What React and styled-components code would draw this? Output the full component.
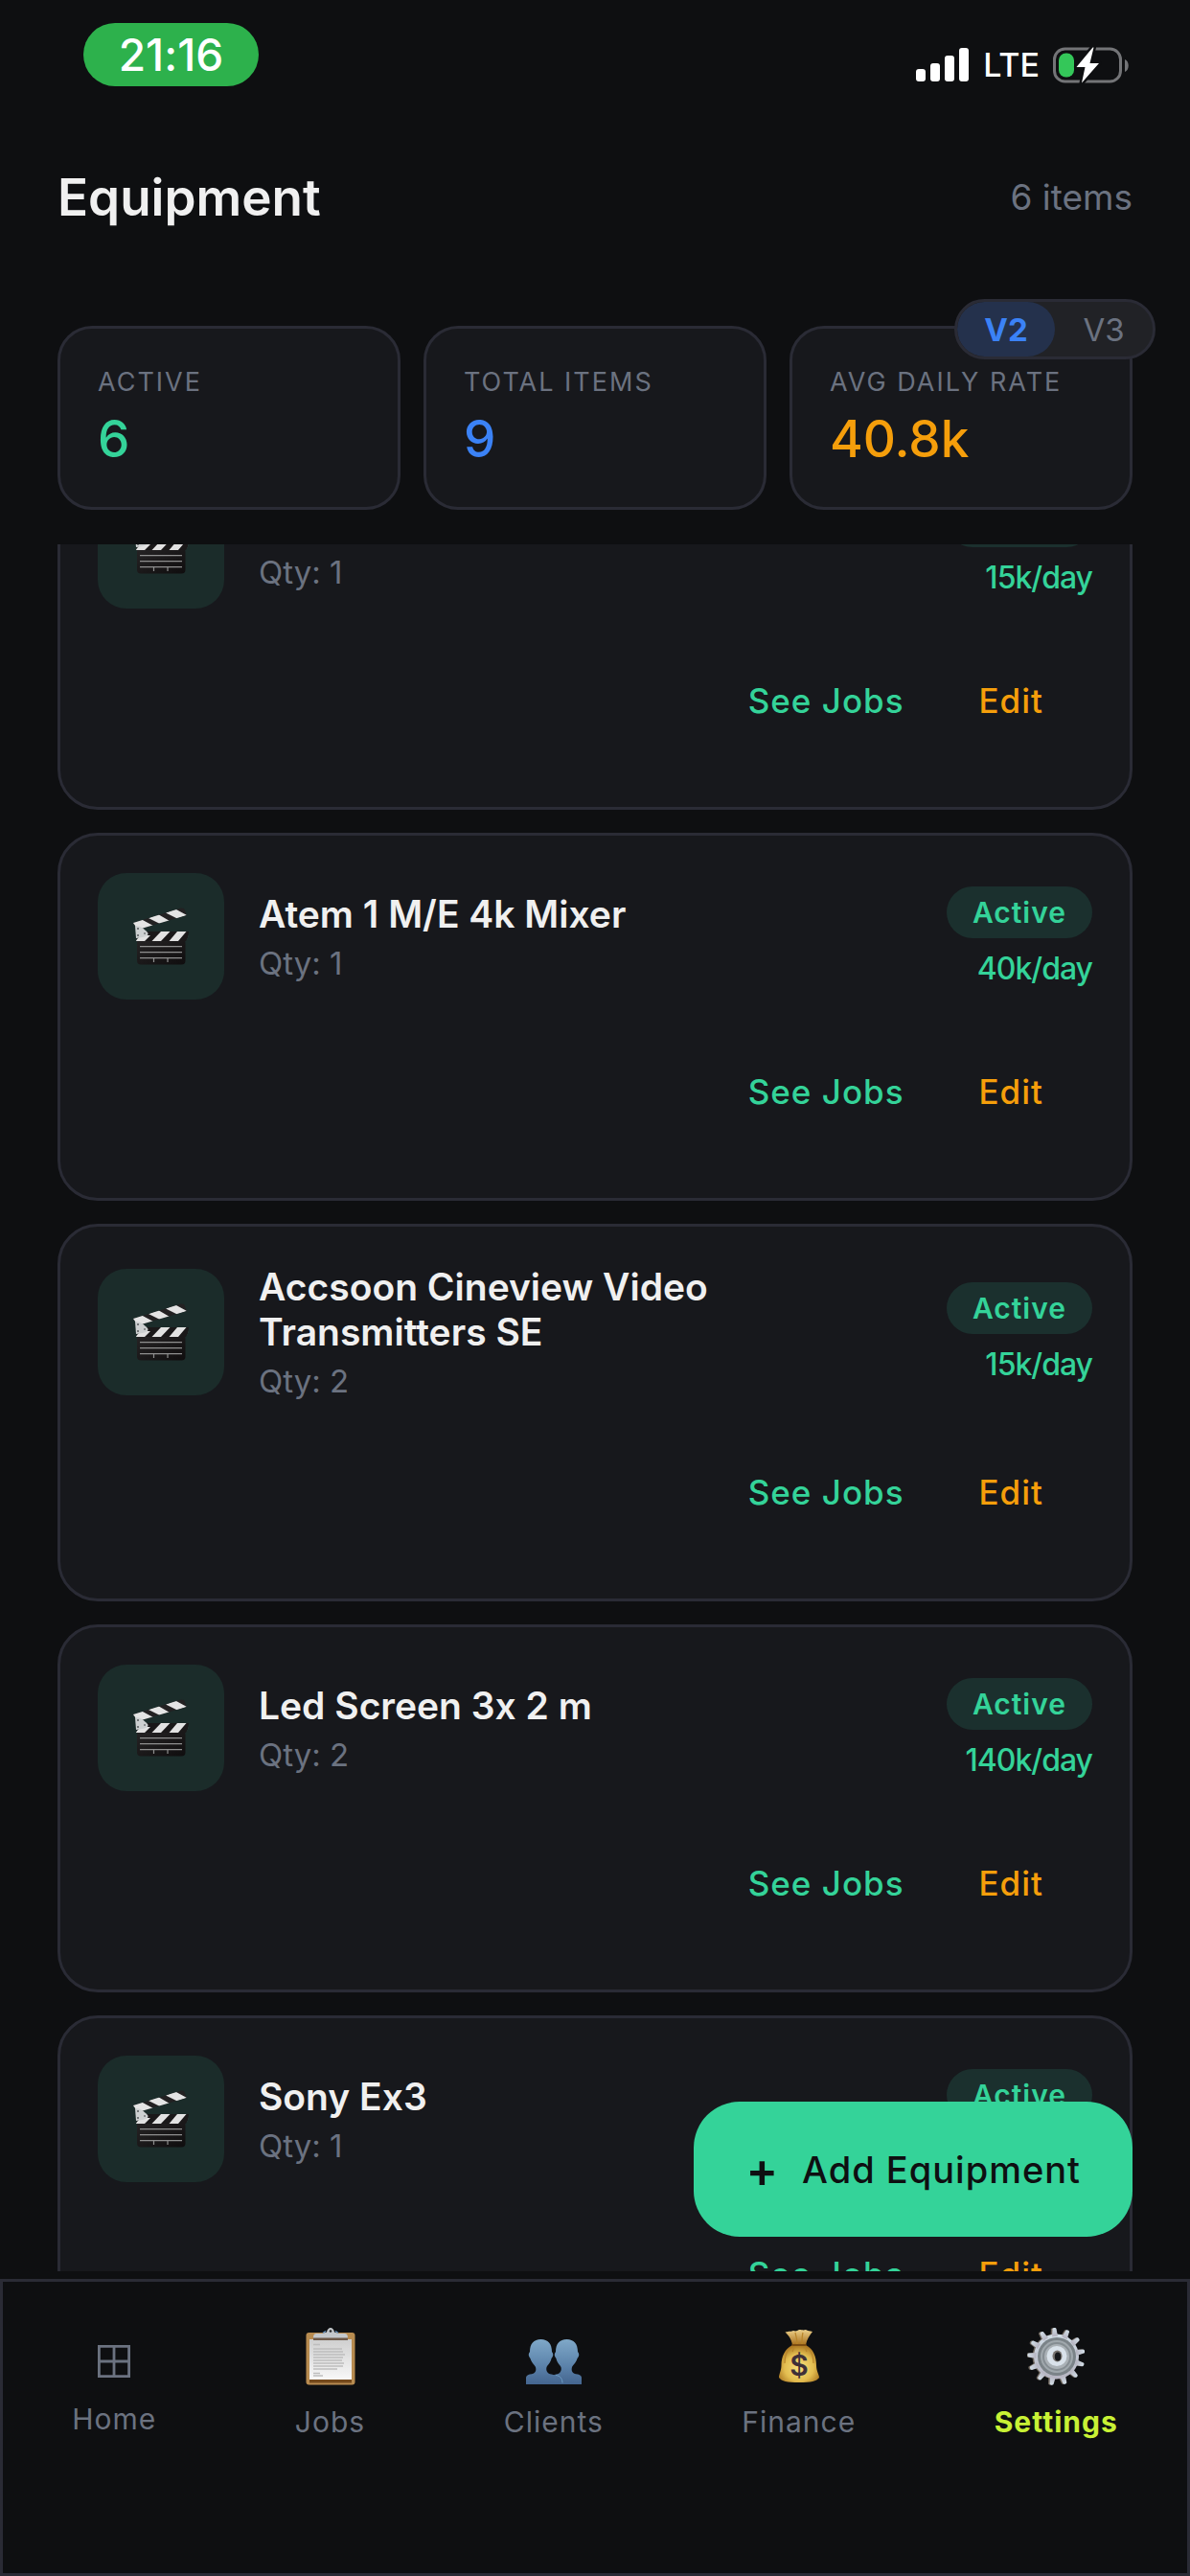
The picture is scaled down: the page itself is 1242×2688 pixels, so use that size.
import React, { useLayoutEffect, useRef, useState } from "react";
import styled, { createGlobalStyle } from "styled-components";

const c = {
  bg: "#0e0f11",
  card: "#17181c",
  border: "#2a2b35",
  text: "#f0f0f0",
  muted: "#6b7280",
  green: "#34d399",
  greenTint: "#1b2c2a",
  blue: "#3b82f6",
  orange: "#f59e0b",
  lime: "#c8f135",
};

const GlobalStyle = createGlobalStyle`
  * { box-sizing: border-box; }
  body { margin: 0; background: ${c.bg}; }
  button { font: inherit; color: inherit; border: 0; padding: 0; background: none; cursor: pointer; }
  h1, h2, p, dl, dt, dd, ul { margin: 0; padding: 0; }
`;

const Screen = styled.div`
  position: relative;
  display: flex;
  flex-direction: column;
  height: 100vh;
  overflow: hidden;
  background: ${c.bg};
  color: ${c.text};
  font-family: Inter, "Liberation Sans", sans-serif;
  font-variant-ligatures: no-contextual;
`;

/* ---------- status bar ---------- */

const StatusBar = styled.div`
  display: flex;
  justify-content: space-between;
  align-items: flex-start;
  flex: none;
  padding: 24px 63px 0 87px;
  color: #fff;
`;

const Clock = styled.time`
  display: flex;
  align-items: center;
  justify-content: center;
  width: 183px;
  height: 66px;
  border-radius: 33px;
  background: #2db14c;
  font-size: 46px;
  font-weight: 500;
`;

const StatusIcons = styled.div`
  display: flex;
  align-items: center;
  gap: 14px;
  height: 87px;
  font-size: 34px;
  font-weight: 500;
`;

/* ---------- page header ---------- */

const Header = styled.header`
  display: flex;
  justify-content: space-between;
  align-items: center;
  flex: none;
  padding: 63px 60px 0;
`;

const Title = styled.h1`
  font-size: 53px;
  line-height: 64px;
  font-weight: 600;
`;

const Count = styled.span`
  font-size: 37px;
  line-height: 48px;
  color: ${c.muted};
`;

const Stats = styled.dl`
  display: grid;
  grid-template-columns: repeat(3, 1fr);
  gap: 24px;
  flex: none;
  padding: 102px 60px 36px;
`;

const Stat = styled.div`
  display: flex;
  flex-direction: column;
  gap: 12px;
  padding: 39px;
  border: 3px solid ${c.border};
  border-radius: 36px;
  background: ${c.card};
`;

const StatLabel = styled.dt`
  font-size: 27px;
  line-height: 33px;
  letter-spacing: 2px;
  text-transform: uppercase;
  white-space: nowrap;
  color: ${c.muted};
`;

const StatValue = styled.dd`
  font-size: 53px;
  line-height: 63px;
  font-weight: 500;
  color: ${(p) => p.$color};
`;

const VersionToggle = styled.div`
  position: absolute;
  top: 312px;
  right: 36px;
  z-index: 2;
  display: flex;
  height: 63px;
  border: 3px solid ${c.border};
  border-radius: 32px;
  overflow: hidden;
  background: #212226;
`;

const VersionButton = styled.button`
  width: 102px;
  border-radius: 30px;
  font-size: 33px;
  font-weight: ${(p) => (p.$on ? 700 : 400)};
  color: ${(p) => (p.$on ? c.blue : c.muted)};
  background: ${(p) => (p.$on ? "#24314c" : "transparent")};
`;

/* ---------- equipment list ---------- */

const List = styled.ul`
  display: flex;
  flex-direction: column;
  gap: 24px;
  flex: 1;
  min-height: 0;
  padding: 0 60px;
  overflow-y: auto;
  list-style: none;
  scrollbar-width: none;
`;

const Card = styled.li`
  display: flex;
  flex-direction: column;
  gap: 24px;
  flex: none;
  padding: 39px;
  border: 3px solid ${c.border};
  border-radius: 42px;
  background: ${c.card};
`;

const CardTop = styled.div`
  display: flex;
  align-items: center;
  gap: 36px;
`;

const Tile = styled.div`
  display: grid;
  place-items: center;
  flex: none;
  width: 132px;
  height: 132px;
  border-radius: 30px;
  background: ${c.greenTint};
`;

const Info = styled.div`
  flex: 1;
  display: flex;
  flex-direction: column;
  gap: 9px;
`;

const Name = styled.h2`
  font-size: 39px;
  line-height: 47px;
  font-weight: 600;
`;

const Qty = styled.p`
  font-size: 33px;
  line-height: 39px;
  color: ${c.muted};
`;

const Meta = styled.div`
  display: flex;
  flex-direction: column;
  align-items: flex-end;
  gap: 12px;
`;

const Badge = styled.span`
  padding: 0 27px;
  border-radius: 27px;
  background: #1b302e;
  color: ${c.green};
  font-size: 30px;
  line-height: 54px;
  font-weight: 600;
  letter-spacing: 1px;
`;

const Rate = styled.span`
  font-size: 32px;
  line-height: 39px;
  font-weight: 500;
  letter-spacing: -1px;
  color: ${c.green};
`;

const Actions = styled.div`
  display: flex;
  justify-content: flex-end;
  padding-right: 12px;
`;

const Action = styled.button`
  height: 144px;
  padding: 0 39px;
  font-size: 35px;
  font-weight: 500;
  letter-spacing: 1px;
  color: ${(p) => p.$color};
`;

const AddButton = styled.button`
  position: absolute;
  right: 60px;
  bottom: 354px;
  z-index: 2;
  display: flex;
  align-items: center;
  gap: 24px;
  height: 141px;
  padding: 0 54px;
  border-radius: 48px;
  background: ${c.green};
  color: ${c.bg};
  font-size: 38px;
  font-weight: 500;
  letter-spacing: 1px;
`;

const Plus = styled.span`
  font-size: 50px;
  font-weight: 600;
`;

/* ---------- tab bar ---------- */

const TabBar = styled.nav`
  display: flex;
  justify-content: space-around;
  align-items: flex-start;
  flex: none;
  height: 310px;
  margin-top: 8px;
  padding-top: 48px;
  border: 3px solid ${c.border};
  background: ${c.bg};
`;

const Tab = styled.a`
  display: flex;
  flex-direction: column;
  align-items: center;
  gap: 20px;
  text-decoration: none;
  color: ${(p) => (p.$active ? c.lime : c.muted)};
  font-size: 30px;
  line-height: 36px;
  font-weight: ${(p) => (p.$active ? 700 : 400)};
  letter-spacing: 1px;
`;

const TabIcon = styled.span`
  display: grid;
  place-items: end center;
  height: ${(p) => (p.$short ? 57 : 60)}px;
`;

/* ---------- drawings ---------- */

const Signal = () => (
  <svg width="56" height="36" viewBox="0 0 56 36" fill="#fff" aria-hidden="true">
    <rect x="0" y="22" width="10" height="13" rx="3" />
    <rect x="15" y="16" width="10" height="19" rx="3" />
    <rect x="30" y="8" width="10" height="27" rx="3" />
    <rect x="45" y="0" width="10" height="35" rx="3" />
  </svg>
);

const Battery = () => (
  <svg width="80" height="40" viewBox="0 0 80 40" aria-hidden="true">
    <rect x="1.5" y="3" width="69" height="34" rx="11" fill="none" stroke="#737477" strokeWidth="3" />
    <path d="M75 14c5 2 5 11 0 13z" fill="#737477" />
    <rect x="6" y="7.500" width="16" height="25" rx="7.500" fill="#34c759" />
    <path
      d="M41.500 1.500 24.500 22h9L30 38.500 48 18h-9.500L42.500 1.500z"
      fill="#fff"
      stroke={c.bg}
      strokeWidth="5"
      paintOrder="stroke"
      strokeLinejoin="round"
    />
  </svg>
);

const Clapper = () => (
  <svg width="58" height="60" viewBox="0 0 58 60" aria-hidden="true">
    <defs>
      <linearGradient id="slate" x1="0" y1="0" x2="1" y2="1">
        <stop offset="0" stopColor="#262425" />
        <stop offset="1" stopColor="#0f0d0e" />
      </linearGradient>
      <clipPath id="arm">
        <path d="M0 16 50 .5l3 .5 3 7L5 23z" />
      </clipPath>
      <clipPath id="bar">
        <path d="M12 25h46l-1 6-2 4H3l2-6z" />
      </clipPath>
    </defs>
    <rect x="4" y="33" width="50.500" height="26.500" rx="4" fill="url(#slate)" />
    <g clipPath="url(#bar)">
      <path d="M0 24h58v12H0z" fill="#1a1819" />
      <path d="M2 35l6-6h10l-6 6zM29 25h9.500L29 35h-9.500zM46 25h9.500L47 35h-9.500zM58 29v3l-2 3z" fill="#e2e2e2" />
    </g>
    <g clipPath="url(#arm)">
      <path d="M0 0h58v26H0z" fill="#232122" />
      <path d="M0 15l8-3 13 7-12 5-9-5zM16 11l10-4 12 7-10 3zM34 5.500l10-4L56 8l-10 3.500z" fill="#e4e4e4" />
    </g>
    <path d="M2 19c6 0 9 3 13 7 2 3-2 5-12 6z" fill="#cdd0d1" />
    <circle cx="5" cy="22" r="1" fill="#55585a" />
    <circle cx="5" cy="29" r="1" fill="#55585a" />
    <circle cx="12" cy="27" r="1" fill="#74787a" />
    <path d="M7 40.700h44M7 46.700h44M7 52.700h44M21.500 53v4M36 53v4" stroke="#8f8f8f" strokeWidth="1.200" />
  </svg>
);

const HomeGlyph = () => (
  <svg width="34" height="39" viewBox="0 0 34 39" fill="none" stroke={c.muted} strokeWidth="2.800" aria-hidden="true">
    <path d="M1.400 1.400h31.200v31.200H1.400zM17 1.400v31.200M1.400 17h31.200" />
  </svg>
);

const Clipboard = () => (
  <svg width="52" height="60" viewBox="0 0 52 60" aria-hidden="true">
    <defs>
      <linearGradient id="sheet" x1="0" y1="0" x2="0" y2="1">
        <stop offset="0" stopColor="#cfcfcf" />
        <stop offset="1" stopColor="#f8f8f8" />
      </linearGradient>
    </defs>
    <rect x="0.500" y="5" width="51" height="54.500" rx="3" fill="#b78b50" />
    <path d="M4 54h44v3.500H4z" fill="#74491c" />
    <path d="M4 12h44v42H4z" fill="url(#sheet)" />
    <path d="M8 11c0-4 1-5 4-5h6l4-1.500c1-6 7-6 8 0L34 6h6c3 0 4 1 4 5z" fill="#c3c7cb" />
    <path d="M8 10.500h36v2.500H8z" fill="#6e5a4a" />
    <path d="M18 5.500l3-2M34 5.500l-3-2" stroke="#6f9bc8" strokeWidth="1.500" />
    <circle cx="26" cy="3.500" r="1.300" fill="#26282a" />
    <path
      d="M8 17.500h7M8 22h30M8 25h31M8 28h33M8 31h31M8 34h30M8 37h32M8 40h31M8 43h25M8 47.500h7M8 50h10"
      stroke="#bdbdbd"
      strokeWidth="1.500"
    />
  </svg>
);

const bust =
  "M15.500 0C23 0 27 5 27 13c2 2 1.500 5-.5 7-1 5-3.500 6-5 9-1 4 1 7 5 7.500 3 .5 5 2 5 4.500v6H0v-7c0-2 2-3 4-3.500 6-.5 7-3.500 6-7.500-1.500-3-4-4-5.500-9-2-2-2.500-5-.5-7 0-8 4-13 11.500-13z";

const People = () => (
  <svg width="58" height="48" viewBox="0 0 58 48" aria-hidden="true">
    <defs>
      <linearGradient id="bust" x1="0" y1="0" x2="0" y2="1">
        <stop offset="0" stopColor="#7fa8c8" />
        <stop offset="0.600" stopColor="#5b82aa" />
        <stop offset="1" stopColor="#44658f" />
      </linearGradient>
    </defs>
    <path d={bust} fill="url(#bust)" transform="matrix(-1 0 0 1 58 0)" />
    <path d={bust} fill="url(#bust)" />
    <path d="M31 37.500c5 .5 7 4 7 8" fill="none" stroke="#6d9dc4" strokeWidth="1" />
  </svg>
);

const BagLetter = styled.text`
  font-family: Inter, "Liberation Sans", sans-serif;
  font-size: 30px;
  font-weight: 600;
  letter-spacing: 0;
`;

const MoneyBag = () => (
  <svg width="42" height="58" viewBox="0 0 42 58" aria-hidden="true">
    <defs>
      <radialGradient id="bag" cx="0.500" cy="0.600" r="0.600">
        <stop offset="0" stopColor="#f7e07c" />
        <stop offset="0.600" stopColor="#e3bd50" />
        <stop offset="1" stopColor="#a8741f" />
      </radialGradient>
      <linearGradient id="neck" x1="0" y1="0" x2="0" y2="1">
        <stop offset="0" stopColor="#ecd08a" />
        <stop offset="1" stopColor="#a9701c" />
      </linearGradient>
    </defs>
    <path d="M14 16C13 9 9 5 6.500 2.500 11 1.500 13 2 15 1c3 1 4 0 6-1 3 0 4 1 7 0 2 1 4 1.500 7 2-3 4-6 8-7 14z" fill="url(#neck)" />
    <path d="M14 16h14c8 4 11 12 11 21 0 6 3 10 3 13-3 4-8 5-21 5S3 54 0 50c0-4 2.500-7 2.500-13C2.500 28 6 20 14 16z" fill="url(#bag)" />
    <path d="M13.500 16h15" stroke="#7d4d12" strokeWidth="2" />
    <path d="M17 3c1 4 2 8 2 12M25 3c-1 4-1 8-1 12M10 21c-3 4-4 9-4 14M32 21c3 4 4 9 4 14M16 18l-2 5M27 18l2 5" fill="none" stroke="#b9852a" strokeWidth="1.200" />
    <BagLetter x="21" y="48" textAnchor="middle" fill="#3f3038">$</BagLetter>
  </svg>
);

const teeth = Array.from({ length: 13 }, (_, i) => (i * 360) / 13 - 4);

const Gear = () => (
  <svg width="60" height="60" viewBox="0 0 60 60" aria-hidden="true">
    <defs>
      <linearGradient id="steel" x1="0" y1="0" x2="0" y2="1">
        <stop offset="0" stopColor="#d3dfe8" />
        <stop offset="1" stopColor="#b5b3c0" />
      </linearGradient>
      <g id="wheel">
        <circle cx="30.500" cy="30" r="23.500" />
        {teeth.map((a) => (
          <path key={a} d="M27.500 9l1-8c.5-1.500 3.500-1.500 4 0l1 8z" transform={`rotate(${a} 30.500 30)`} />
        ))}
      </g>
    </defs>
    <use href="#wheel" x="-1.500" y="0" fill="#6f675f" />
    <use href="#wheel" fill="url(#steel)" />
    <circle cx="31" cy="30" r="20" fill="#7b8388" />
    <circle cx="31" cy="30" r="17" fill="#a0a8ad" />
    <circle cx="31" cy="30" r="15" fill="#858d92" />
    <circle cx="31" cy="30" r="13" fill="#aab1b6" />
    <circle cx="31" cy="29.500" r="10.500" fill="#d9e2ea" />
    <ellipse cx="31.500" cy="29.500" rx="5" ry="6" fill="#77736f" />
    <ellipse cx="32" cy="30" rx="3.200" ry="4.500" fill="#17191b" />
  </svg>
);

/* ---------- data ---------- */

const stats = [
  { label: "Active", value: "6", color: c.green },
  { label: "Total items", value: "9", color: c.blue },
  { label: "Avg daily rate", value: "40.8k", color: c.orange },
];

const equipment = [
  { name: "Camera", qty: 1, rate: "15k" },
  { name: "Atem 1 M/E 4k Mixer", qty: 1, rate: "40k" },
  { name: "Accsoon Cineview Video Transmitters SE", qty: 2, rate: "15k" },
  { name: "Led Screen 3x 2 m", qty: 2, rate: "140k" },
  { name: "Sony Ex3", qty: 1, rate: "15k" },
];

const tabs = [
  { label: "Home", Icon: HomeGlyph, short: true },
  { label: "Jobs", Icon: Clipboard },
  { label: "Clients", Icon: People },
  { label: "Finance", Icon: MoneyBag },
  { label: "Settings", Icon: Gear, active: true },
];

const INITIAL_SCROLL = 107;

export default function App() {
  const listRef = useRef(null);
  const [version, setVersion] = useState("V2");

  useLayoutEffect(() => {
    listRef.current.scrollTop = INITIAL_SCROLL;
  }, []);

  return (
    <Screen>
      <GlobalStyle />
      <StatusBar>
        <Clock>21:16</Clock>
        <StatusIcons>
          <Signal />
          <span>LTE</span>
          <Battery />
        </StatusIcons>
      </StatusBar>

      <Header>
        <Title>Equipment</Title>
        <Count>6 items</Count>
      </Header>

      <Stats>
        {stats.map((s) => (
          <Stat key={s.label}>
            <StatLabel>{s.label}</StatLabel>
            <StatValue $color={s.color}>{s.value}</StatValue>
          </Stat>
        ))}
      </Stats>

      <VersionToggle>
        {["V2", "V3"].map((v) => (
          <VersionButton key={v} type="button" $on={v === version} aria-pressed={v === version} onClick={() => setVersion(v)}>
            {v}
          </VersionButton>
        ))}
      </VersionToggle>

      <List ref={listRef}>
        {equipment.map((e) => (
          <Card key={e.name}>
            <CardTop>
              <Tile>
                <Clapper />
              </Tile>
              <Info>
                <Name>{e.name}</Name>
                <Qty>Qty: {e.qty}</Qty>
              </Info>
              <Meta>
                <Badge>Active</Badge>
                <Rate>{e.rate}/day</Rate>
              </Meta>
            </CardTop>
            <Actions>
              <Action type="button" $color={c.green}>See Jobs</Action>
              <Action type="button" $color={c.orange}>Edit</Action>
            </Actions>
          </Card>
        ))}
      </List>

      <AddButton type="button">
        <Plus>+</Plus>
        Add Equipment
      </AddButton>

      <TabBar>
        {tabs.map(({ label, Icon, short, active }) => (
          <Tab key={label} href={`#${label.toLowerCase()}`} $active={active} aria-current={active ? "page" : undefined}>
            <TabIcon $short={short}>
              <Icon />
            </TabIcon>
            {label}
          </Tab>
        ))}
      </TabBar>
    </Screen>
  );
}
